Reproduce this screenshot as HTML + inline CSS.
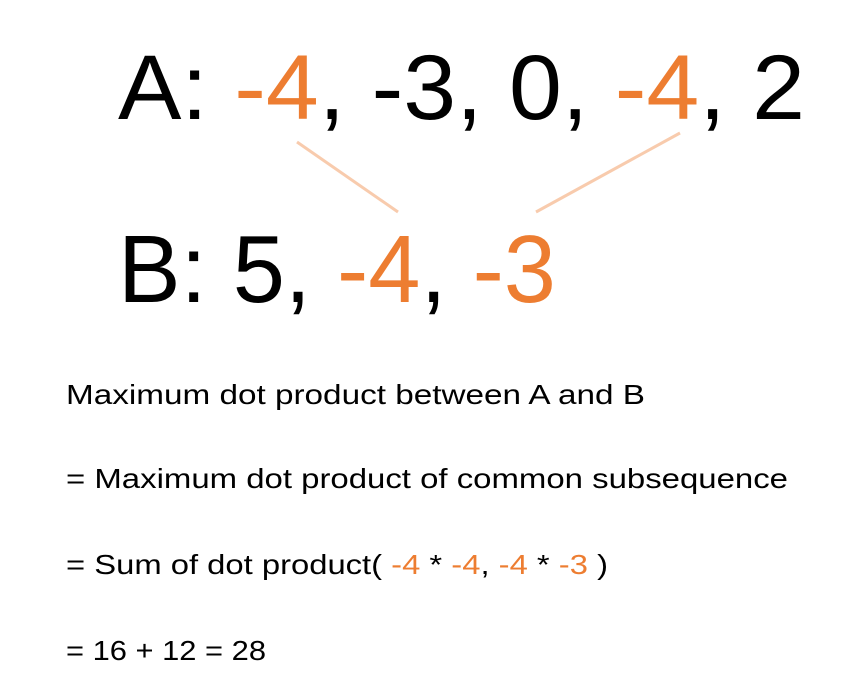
<!DOCTYPE html>
<html><head><meta charset="utf-8"><style>
html,body{margin:0;padding:0;background:#fff;width:858px;height:685px;overflow:hidden}
svg{display:block}
text{font-family:"Liberation Sans",sans-serif}
.o{fill:#ED7D31}
</style></head><body>
<svg width="858" height="685" viewBox="0 0 858 685" xmlns="http://www.w3.org/2000/svg">
<line x1="297" y1="142" x2="398" y2="212" stroke="#F8CBAD" stroke-width="3"/>
<line x1="680" y1="133" x2="536" y2="212" stroke="#F8CBAD" stroke-width="3"/>
<text x="118" y="119" font-size="92" textLength="687" lengthAdjust="spacingAndGlyphs">A: <tspan class="o">-4</tspan>, -3, 0, <tspan class="o">-4</tspan>, 2</text>
<text x="118" y="302" font-size="96" textLength="438" lengthAdjust="spacingAndGlyphs">B: 5, <tspan class="o">-4</tspan>, <tspan class="o">-3</tspan></text>
<text x="66" y="404" font-size="28" textLength="579" lengthAdjust="spacingAndGlyphs">Maximum dot product between A and B</text>
<text x="66" y="488" font-size="28" textLength="722" lengthAdjust="spacingAndGlyphs">= Maximum dot product of common subsequence</text>
<text x="66" y="574" font-size="28" textLength="542" lengthAdjust="spacingAndGlyphs">= Sum of dot product( <tspan class="o">-4</tspan> * <tspan class="o">-4</tspan>, <tspan class="o">-4</tspan> * <tspan class="o">-3</tspan> )</text>
<text x="66" y="660" font-size="28" textLength="200" lengthAdjust="spacingAndGlyphs">= 16 + 12 = 28</text>
</svg>
</body></html>
